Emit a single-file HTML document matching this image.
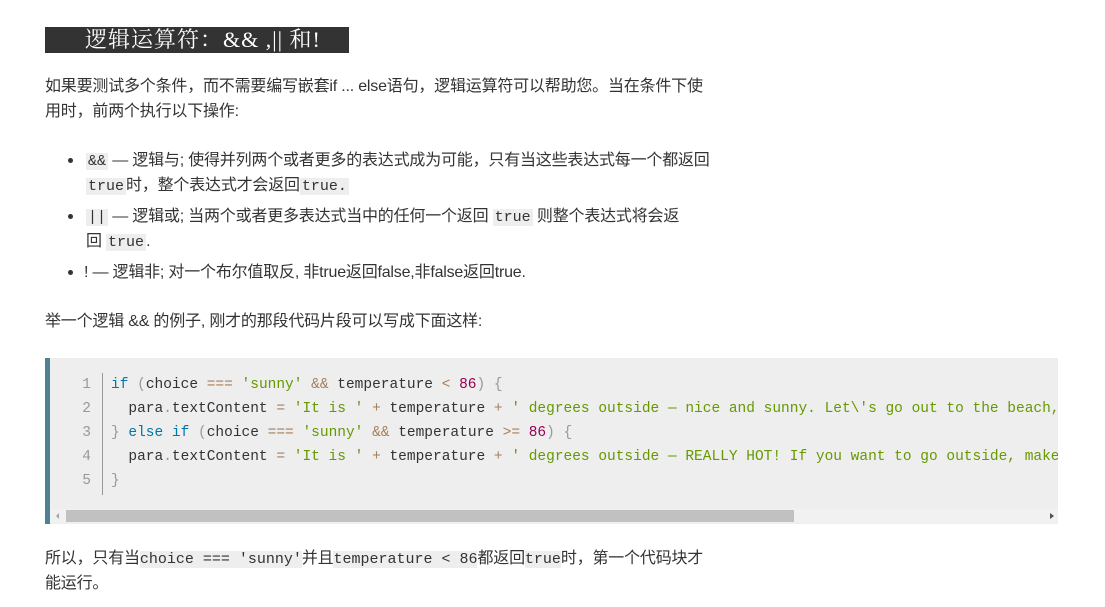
<!DOCTYPE html>
<html><head><meta charset="utf-8"><style>
body{margin:0;width:1105px;height:607px;background:#fff;overflow:hidden;position:relative;font-family:"Liberation Sans","Noto Sans CJK SC",sans-serif;color:#333;font-size:16px;letter-spacing:-0.2px}
.l{position:absolute;white-space:nowrap;line-height:20px}
code{font-family:"Liberation Mono","Noto Sans CJK SC",monospace;font-size:15px;background:#eee;padding:0 2px;letter-spacing:0}
.h{position:absolute;left:45px;top:27px;width:304px;height:26px;background:#333;color:#fff;font-size:22px;line-height:26px;white-space:nowrap;font-family:"Liberation Serif","Noto Serif CJK SC",serif;letter-spacing:1px}
.dot{position:absolute;width:5px;height:5px;border-radius:50%;background:#333}
.code{position:absolute;left:45px;top:358px;width:1013px;height:166px;background:#eee;border-left:5px solid #4e8096;box-sizing:border-box;overflow:hidden;letter-spacing:0}
.cl{position:absolute;white-space:pre;font-family:"Liberation Mono",monospace;font-size:14.5px;line-height:20px;color:#333}
.n{position:absolute;left:25px;width:16px;text-align:right;font-family:"Liberation Mono",monospace;font-size:14.5px;color:#999;line-height:20px}
.k{color:#07a}.s{color:#690}.o{color:#a67f59}.p{color:#999}.d{color:#905}
</style></head><body>
<div class="h"><span style="padding-left:40px">逻辑运算符：&amp;&amp; ,|| 和!</span></div>
<div class="l" style="left:45px;top:77px">如果要测试多个条件，而不需要编写嵌套if ... else语句，逻辑运算符可以帮助您。当在条件下使</div>
<div class="l" style="left:45px;top:102px">用时，前两个执行以下操作:</div>
<div class="dot" style="left:68px;top:158px"></div>
<div class="l" style="left:86px;top:151px"><code>&amp;&amp;</code> — 逻辑与; 使得并列两个或者更多的表达式成为可能，只有当这些表达式每一个都返回</div>
<div class="l" style="left:86px;top:176px"><code>true</code>时，整个表达式才会返回<code>true.</code></div>
<div class="dot" style="left:68px;top:214px"></div>
<div class="l" style="left:86px;top:207px"><code>||</code> — 逻辑或; 当两个或者更多表达式当中的任何一个返回 <code>true</code> 则整个表达式将会返</div>
<div class="l" style="left:86px;top:232px">回 <code>true</code>.</div>
<div class="dot" style="left:68px;top:270px"></div>
<div class="l" style="left:84px;top:263px">! — 逻辑非; 对一个布尔值取反, 非true返回false,非false返回true.</div>
<div class="l" style="left:45px;top:312px">举一个逻辑 &amp;&amp; 的例子, 刚才的那段代码片段可以写成下面这样:</div>
<div class="code">
<div style="position:absolute;left:52px;top:15px;width:1px;height:122px;background:#999"></div>
<div class="n" style="top:17px">1</div><div class="n" style="top:41px">2</div><div class="n" style="top:65px">3</div><div class="n" style="top:89px">4</div><div class="n" style="top:113px">5</div>
<div class="cl" style="left:61px;top:17px"><span class="k">if</span> <span class="p">(</span>choice <span class="o">===</span> <span class="s">'sunny'</span> <span class="o">&amp;&amp;</span> temperature <span class="o">&lt;</span> <span class="d">86</span><span class="p">)</span> <span class="p">{</span></div>
<div class="cl" style="left:61px;top:41px">  para<span class="p">.</span>textContent <span class="o">=</span> <span class="s">'It is '</span> <span class="o">+</span> temperature <span class="o">+</span> <span class="s">' degrees outside — nice and sunny. Let\'s go out to the beach, or the park, and get an ice cream.'</span></div>
<div class="cl" style="left:61px;top:65px"><span class="p">}</span> <span class="k">else</span> <span class="k">if</span> <span class="p">(</span>choice <span class="o">===</span> <span class="s">'sunny'</span> <span class="o">&amp;&amp;</span> temperature <span class="o">&gt;=</span> <span class="d">86</span><span class="p">)</span> <span class="p">{</span></div>
<div class="cl" style="left:61px;top:89px">  para<span class="p">.</span>textContent <span class="o">=</span> <span class="s">'It is '</span> <span class="o">+</span> temperature <span class="o">+</span> <span class="s">' degrees outside — REALLY HOT! If you want to go outside, make sure to put some suncream on.'</span></div>
<div class="cl" style="left:61px;top:113px"><span class="p">}</span></div>
<div style="position:absolute;left:0;top:151px;width:1008px;height:14px;background:#f1f1f1"></div>
<div style="position:absolute;left:16px;top:152px;width:728px;height:12px;background:#c1c1c1"></div>
<div style="position:absolute;left:6px;top:155px;width:0;height:0;border-top:3px solid transparent;border-bottom:3px solid transparent;border-right:3px solid #a3a3a3"></div>
<div style="position:absolute;left:1000px;top:155px;width:0;height:0;border-top:3px solid transparent;border-bottom:3px solid transparent;border-left:4px solid #505050"></div>
</div>
<div class="l" style="left:45px;top:549px">所以，只有当<code style="padding:0">choice === 'sunny'</code>并且<code style="padding:0">temperature &lt; 86</code>都返回<code style="padding:0">true</code>时，第一个代码块才</div>
<div class="l" style="left:45px;top:574px">能运行。</div>
</body></html>
